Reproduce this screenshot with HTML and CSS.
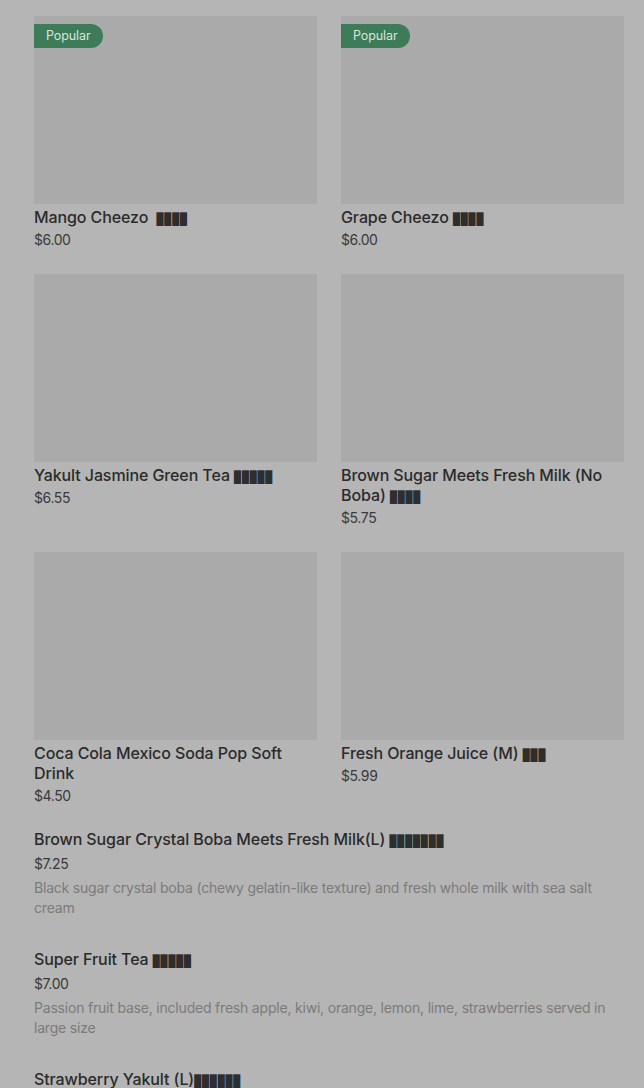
FILE: index.html
```html
<!DOCTYPE html>
<html>
<head>
<meta charset="utf-8">
<link rel="stylesheet" href="styles.css">
</head>
<body>
<div class="page">
  <div class="grid">
    <div class="card">
      <div class="thumb"><span class="badge">Popular</span></div>
      <div class="title">Mango Cheezo&nbsp; <span class="tofu">████</span></div>
      <div class="price">$6.00</div>
    </div>
    <div class="card">
      <div class="thumb"><span class="badge">Popular</span></div>
      <div class="title">Grape Cheezo <span class="tofu">████</span></div>
      <div class="price">$6.00</div>
    </div>
    <div class="card">
      <div class="thumb"></div>
      <div class="title">Yakult Jasmine Green Tea <span class="tofu">█████</span></div>
      <div class="price">$6.55</div>
    </div>
    <div class="card">
      <div class="thumb"></div>
      <div class="title">Brown Sugar Meets Fresh Milk (No Boba) <span class="tofu">████</span></div>
      <div class="price">$5.75</div>
    </div>
    <div class="card">
      <div class="thumb"></div>
      <div class="title">Coca Cola Mexico Soda Pop Soft Drink</div>
      <div class="price">$4.50</div>
    </div>
    <div class="card">
      <div class="thumb"></div>
      <div class="title">Fresh Orange Juice (M) <span class="tofu">███</span></div>
      <div class="price">$5.99</div>
    </div>
  </div>
  <div class="list">
    <div class="item">
      <div class="title">Brown Sugar Crystal Boba Meets Fresh Milk(L) <span class="tofu">███████</span></div>
      <div class="iprice">$7.25</div>
      <div class="desc">Black sugar crystal boba (chewy gelatin-like texture) and fresh whole milk with sea salt cream</div>
    </div>
    <div class="item">
      <div class="title">Super Fruit Tea <span class="tofu">█████</span></div>
      <div class="iprice">$7.00</div>
      <div class="desc">Passion fruit base, included fresh apple, kiwi, orange, lemon, lime, strawberries served in large size</div>
    </div>
    <div class="item">
      <div class="title">Strawberry Yakult (L)<span class="tofu">██████</span></div>
      <div class="iprice">$6.75</div>
      <div class="desc">Fresh strawberry with Yakult</div>
    </div>
  </div>
</div>
</body>
</html>
```

FILE: styles.css
```css
html, body {
  margin: 0;
  padding: 0;
  background: #b5b5b5;
  height: 1088px;
  overflow: hidden;
}
body {
  font-family: Inter, "Liberation Sans", sans-serif;
  color: #2e2e2e;
}
.page {
  padding: 16px 20px 0 34px;
}
.grid {
  display: grid;
  grid-template-columns: 283px 283px;
  column-gap: 24px;
  row-gap: 24px;
}
.card {
  display: flex;
  flex-direction: column;
}
.thumb {
  position: relative;
  height: 188px;
  background: #aaaaaa;
  margin-bottom: 3px;
}
.badge {
  position: absolute;
  left: 0;
  top: 8px;
  height: 24px;
  line-height: 24px;
  padding: 0 12px;
  background: #3e7b58;
  color: #d6e6dc;
  font-size: 12.5px;
  letter-spacing: -0.1px;
  border-radius: 0 12px 12px 0;
}
.title {
  font-size: 16px;
  font-weight: 500;
  line-height: 20px;
  letter-spacing: -0.1px;
  color: #2b2b2b;
}
.tofu {
  font-family: "DejaVu Sans Mono", monospace;
  font-size: 11.5px;
  line-height: 0;
  letter-spacing: 0.9px;
  color: #2e2e2e;
}
.price {
  margin-top: 3px;
  font-size: 14px;
  line-height: 20px;
  letter-spacing: -0.4px;
  color: #3a3a3a;
}
.list {
  margin-top: 23px;
  display: flex;
  flex-direction: column;
  gap: 31px;
}
.iprice {
  margin-top: 5px;
  font-size: 14px;
  line-height: 20px;
  letter-spacing: -0.4px;
  color: #3a3a3a;
}
.desc {
  margin-top: 4px;
  font-size: 14px;
  line-height: 20px;
  letter-spacing: -0.2px;
  color: #7b7b7b;
}
```
